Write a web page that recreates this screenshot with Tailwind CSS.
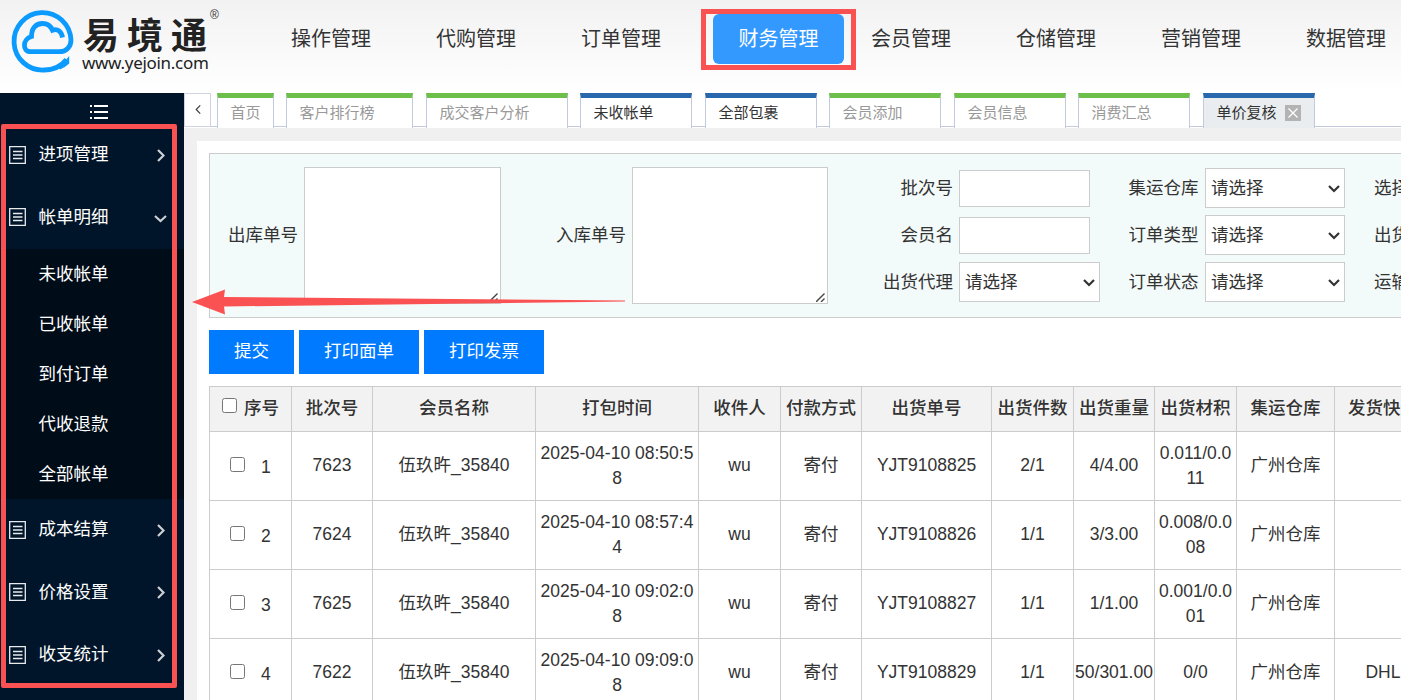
<!DOCTYPE html>
<html lang="zh-CN">
<head>
<meta charset="utf-8">
<title>易境通</title>
<script src="https://cdn.jsdelivr.net/npm/@tailwindcss/browser@4"></script>
</head>
<body class="relative h-[700px] w-[1401px] overflow-hidden bg-[#f0f0f0] font-['Liberation_Sans','Noto_Sans_CJK_SC',sans-serif] text-[17.5px] leading-[25px] text-[#333]">

<header class="flex h-[93px] bg-linear-to-b from-[#f2f2f2] to-white">
  <div class="flex w-[258.5px] shrink-0 pl-[8px] pt-[6px]">
    <svg class="size-[70px] shrink-0" viewBox="0 0 70 70" fill="none" stroke="#0b9bff">
      <path d="M58.500 53.500C53 60.500 45 64 36 64A28.500 28.700 0 1 1 63 34C63 41 58 45.700 51.500 45.700H22.500C14 45.700 14.500 33 23.500 30.500C23.500 22 28 17.500 34.500 17.500C39.500 17.500 42.500 19.500 44.500 24.200C49.500 22.200 53.500 25.500 54.500 31.500" stroke-width="4.800"/>
      <path d="M61.200 50V57.500Q57 61.500 52 63.500L49 60Q56 57 61.200 50Z" fill="#0b9bff" stroke="none"/>
    </svg>
    <div class="pl-[4px] pt-[3px]">
      <div class="flex h-[44px]">
        <span class="w-[128px] pl-px font-['Noto_Sans_CJK_SC',sans-serif] text-[36px] leading-[49px] tracking-[8px] font-bold whitespace-nowrap text-[#222]">易境通</span>
        <span class="text-[12px] leading-[12px] text-[#333]">®</span>
      </div>
      <div class="font-['Noto_Sans',sans-serif] text-[17px] leading-[20px] tracking-[-0.3px] text-[#222]">www.yejoin.com</div>
    </div>
  </div>
  <nav class="flex h-[78px] items-center text-[20px] leading-[30px]">
    <span class="w-[145px] shrink-0 text-center">操作管理</span>
    <span class="w-[145px] shrink-0 text-center">代购管理</span>
    <span class="w-[145px] shrink-0 text-center">订单管理</span>
    <span class="ml-[19.500px] mr-[-6px] h-[50px] w-[131px] shrink-0 rounded-[6px] bg-[#3399ff] text-center leading-[50px] text-white">财务管理</span>
    <span class="w-[145px] shrink-0 pl-px text-center">会员管理</span>
    <span class="w-[145px] shrink-0 pl-px text-center">仓储管理</span>
    <span class="w-[145px] shrink-0 pl-px text-center">营销管理</span>
    <span class="w-[145px] shrink-0 pl-px text-center">数据管理</span>
  </nav>
</header>

<div class="flex">
  <aside class="h-[607px] w-[184px] shrink-0 bg-[#001529] text-white">
    <div class="flex h-[31px] items-center pl-[90px] pt-[6px]">
      <svg class="h-[16px] w-[18px]" viewBox="0 0 18 16" fill="#fff" shape-rendering="crispEdges"><path d="M0 1h2v2H0zM4 1h14v2H4zM0 7h2v2H0zM4 7h14v2H4zM0 13h2v2H0zM4 13h14v2H4z"/></svg>
    </div>
    <div data-menu="进项管理"></div>
    <div data-menu="帐单明细" data-open></div>
    <ul class="h-[250px] bg-[#000c17] pl-[38.5px] leading-[50px]">
      <li>未收帐单</li><li>已收帐单</li><li>到付订单</li><li>代收退款</li><li>全部帐单</li>
    </ul>
    <div data-menu="成本结算"></div>
    <div data-menu="价格设置"></div>
    <div data-menu="收支统计"></div>
  </aside>

  <div class="w-[1217px] shrink-0">
    <div class="flex h-[35px] bg-white text-[15px] leading-[30px] text-[#999]">
      <div class="flex h-[34px] w-[27px] shrink-0 items-center justify-center border border-[#d0d4e0]">
        <svg class="mt-[-1px] h-[9px] w-[6px]" viewBox="0 0 6 10" fill="none" stroke="#333" stroke-width="1.200"><path d="M5.500 .5L1 5l4.500 4.500"/></svg>
      </div>
      <div class="h-[34px] w-[6px] shrink-0 border-b border-[#c3cade]"></div>
      <div id="tabs" class="flex"></div>
      <div class="h-[34px] w-[90px] shrink-0 border-b border-[#c3cade]"></div>
    </div>

    <main class="ml-[13px] mt-[13px] h-[559px] overflow-hidden bg-white pl-3 pt-3">
      <form class="flex h-[165px] w-[1300px] border border-[#ccc] bg-[#f3fafa]">
        <div class="flex pl-[18px] pt-[13px]">
          <label class="w-[76px] pt-[56px]">出库单号</label>
          <div class="relative h-[137px]"><textarea class="block h-[137px] w-[197px] resize-none border border-[#ccc] bg-white"></textarea><svg class="absolute right-[3px] bottom-[2px] size-[9px]" viewBox="0 0 9 9" stroke="#444" stroke-width="1.400"><path d="M0 9L8.500 .5M5 9L8.500 5.500"/></svg></div>
          <label class="ml-[55px] w-[76px] pt-[56px]">入库单号</label>
          <div class="relative h-[137px]"><textarea class="block h-[137px] w-[196px] resize-none border border-[#ccc] bg-white"></textarea><svg class="absolute right-[3px] bottom-[2px] size-[9px]" viewBox="0 0 9 9" stroke="#444" stroke-width="1.400"><path d="M0 9L8.500 .5M5 9L8.500 5.500"/></svg></div>
        </div>
        <div class="mt-[10.500px] ml-[55px] grid grid-cols-[70px_142px_103.5px_141.5px_34px_100px] auto-rows-[47px] items-center text-[17.5px]">
          <label class="text-right">批次号</label>
          <input class="ml-[6px] h-[37px] w-[131px] border border-[#ccc] bg-white">
          <label class="text-right">集运仓库</label>
          <div data-select class="ml-[6.5px] w-[140px]"></div>
          <span></span><label>选择时间</label>
          <label class="text-right">会员名</label>
          <input class="ml-[6px] h-[37px] w-[131px] border border-[#ccc] bg-white">
          <label class="text-right">订单类型</label>
          <div data-select class="ml-[6.5px] w-[140px]"></div>
          <span></span><label>出货单号</label>
          <label class="text-right">出货代理</label>
          <div data-select class="ml-[6px] w-[141px]"></div>
          <label class="text-right">订单状态</label>
          <div data-select class="ml-[6.5px] w-[140px]"></div>
          <span></span><label>运输方式</label>
        </div>
      </form>

      <div class="mt-3 flex gap-[5px] text-white">
        <button class="h-[44px] w-[85px] bg-[#007bff] pb-[2px]">提交</button>
        <button class="h-[44px] w-[120px] bg-[#007bff] pb-[2px]">打印面单</button>
        <button class="h-[44px] w-[120px] bg-[#007bff] pb-[2px]">打印发票</button>
      </div>

      <table class="mt-3 w-[1223px] table-fixed border-collapse text-center">
        <colgroup><col class="w-[82px]"><col class="w-[81px]"><col class="w-[163px]"><col class="w-[163px]"><col class="w-[82px]"><col class="w-[81px]"><col class="w-[130px]"><col class="w-[82px]"><col class="w-[81px]"><col class="w-[82px]"><col class="w-[98px]"><col class="w-[97px]"></colgroup>
        <thead><tr id="head" class="h-[45px] bg-[#f2f2f2]"></tr></thead>
        <tbody id="rows"></tbody>
      </table>
    </main>
  </div>
</div>

<div class="pointer-events-none absolute left-[701px] top-[9px] h-[61px] w-[155px] border-5 border-[#fa5252]"></div>
<div class="pointer-events-none absolute left-[1px] top-[124px] h-[564px] w-[176px] rounded-[2px] border-5 border-[#fa5252]"></div>
<svg class="pointer-events-none absolute left-[190px] top-[285px] h-[34px] w-[440px]" viewBox="0 0 440 34"><path d="M2 17L35 4.500L34 12L435 15.500V16.500L34 21.500L35 29.500Z" fill="#fa5252"/></svg>

<script>
document.querySelectorAll('[data-menu]').forEach(el => {
  const open = el.hasAttribute('data-open');
  el.className = 'flex h-[62.5px] items-center';
  el.innerHTML = `<svg class="ml-[9px] mt-[-1px] h-[18px] w-[17px]" viewBox="0 0 17 18" fill="none" stroke="#e8ebee" stroke-width="1.3"><path d="M.7.7h15.600v16.600H.7zM4 5.500h9.500M4 9h9.500M4 12.500h9.500"/></svg>
    <span class="ml-[12.5px] mt-[-1.5px] w-[117.5px]">${el.dataset.menu}</span>` + (open
    ? '<svg class="-ml-[2px] mt-[2px] h-[8px] w-[13px]" viewBox="0 0 13 8" fill="none" stroke="#ccd0d4" stroke-width="2.2"><path d="M1 1l5.500 5L12 1"/></svg>'
    : '<svg class="ml-px h-[13px] w-[8px]" viewBox="0 0 8 13" fill="none" stroke="#ccd0d4" stroke-width="2.2"><path d="M1 1l5.500 5.500L1 12"/></svg>');
});

document.querySelectorAll('[data-select]').forEach(el => {
  el.classList.add('relative');
  el.innerHTML = `<select class="block h-[40px] w-full appearance-none border border-[#ccc] bg-white pl-[5px]"><option>请选择</option></select>
    <svg class="absolute right-[5.5px] top-[17px] h-[8px] w-[12px]" viewBox="0 0 12 8" fill="none" stroke="#333" stroke-width="2.2"><path d="M1 1l5 5 5-5"/></svg>`;
});

const gap = w => `<div class="h-[34px] shrink-0 border-b border-[#c3cade]" style="width:${w}px"></div>`;
const green = 'border-t-[#6cc04a] bg-white', blue = 'border-t-[#2a68ae] bg-white text-[#333]', active = 'border-t-[#2a68ae] bg-[#e9edf0] text-[#333]';
document.getElementById('tabs').innerHTML = [
  ['首页', 57, green, 12], ['客户排行榜', 127, green, 13], ['成交客户分析', 142, green, 12], ['未收帐单', 112, blue, 13],
  ['全部包裹', 112, blue, 12], ['会员添加', 112, green, 13], ['会员信息', 112, green, 12], ['消费汇总', 112, green, 13], ['单价复核', 112, active, 0]
].map(([t, w, c, g]) => `<div class="flex h-[35px] shrink-0 items-center border-x border-t-5 border-x-[#c3cade] pl-[12.5px] ${c}" style="width:${w}px"><span>${t}</span>${c === active
  ? '<svg class="ml-[8.5px] mt-[-1px] size-4 bg-[#b3b3b3]" viewBox="0 0 16 16" fill="none" stroke="#fff" stroke-width="1.2"><path d="M3.500 3.500l9 9M12.500 3.500l-9 9"/></svg>' : ''}</div>` + (g ? gap(g) : '')).join('');

document.getElementById('head').innerHTML = ['序号', '批次号', '会员名称', '打包时间', '收件人', '付款方式', '出货单号', '出货件数', '出货重量', '出货材积', '集运仓库', '发货快递']
  .map((t, i) => `<th class="border border-[#ccc] p-0 pb-[2px] font-medium whitespace-nowrap">${i ? t : `<div class="flex items-center gap-[7px] pl-3"><input type="checkbox" class="-mt-[5px] size-[15px]">${t}</div>`}</th>`).join('');
document.getElementById('rows').innerHTML = [
  ['7623', '2025-04-10 08:50:5<br>8', 'YJT9108825', '2/1', '4/4.00', '0.011/0.0<br>11', ''],
  ['7624', '2025-04-10 08:57:4<br>4', 'YJT9108826', '1/1', '3/3.00', '0.008/0.0<br>08', ''],
  ['7625', '2025-04-10 09:02:0<br>8', 'YJT9108827', '1/1', '1/1.00', '0.001/0.0<br>01', ''],
  ['7622', '2025-04-10 09:09:0<br>8', 'YJT9108829', '1/1', '50/301.00', '0/0', 'DHL']
].map((r, i) => `<tr class="h-[69px]">` + [
  `<div class="flex items-center gap-4 pl-5"><input type="checkbox" class="-mt-[2px] size-[15px]"><span class="mt-[3px]">${i + 1}</span></div>`,
  r[0], '伍玖旿_35840', r[1], 'wu', '寄付', r[2], r[3], r[4], r[5], '广州仓库', r[6]
].map(t => `<td class="border border-[#ccc] p-0 pb-px whitespace-nowrap">${t}</td>`).join('') + '</tr>').join('');
</script>
</body>
</html>
